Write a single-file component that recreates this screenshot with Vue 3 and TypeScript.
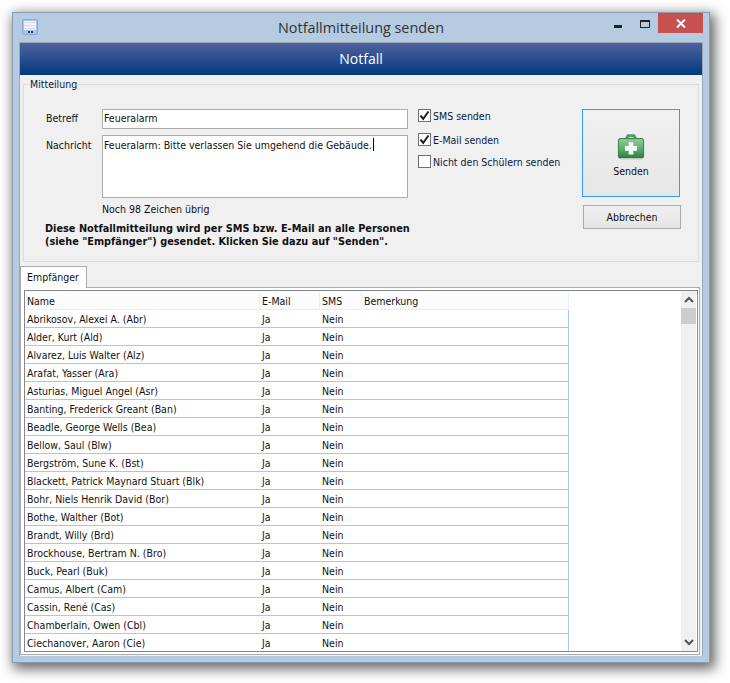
<template>
  <div class="desktop">
    <div class="window">
      <div class="titlebar">
        <svg class="app-icon" width="16" height="16" viewBox="0 0 16 16">
          <rect x="0.5" y="0.5" width="15" height="15" rx="1.5" fill="#a8c5e8" stroke="#8aa9d2" />
          <rect x="2" y="2" width="12" height="9" fill="#eef2f9" />
          <path d="M2 3.5h12M2 6.5h12M2 9.5h12" stroke="#d8dfec" />
          <rect x="6" y="12" width="2" height="2" fill="#2f3f5a" />
          <rect x="9" y="12" width="2" height="2" fill="#2f3f5a" />
        </svg>
        <span class="title">Notfallmitteilung senden</span>
        <div class="win-controls">
          <span class="win-min"></span>
          <span class="win-max"></span>
          <span class="win-close">
            <svg width="10" height="9" viewBox="0 0 10 9">
              <path d="M1 0.5 L9 8.5 M9 0.5 L1 8.5" stroke="#fff" stroke-width="2" />
            </svg>
          </span>
        </div>
      </div>

      <div class="client">
        <div class="banner">Notfall</div>

        <fieldset class="group">
          <legend>Mitteilung</legend>
          <div class="group-body">
            <div class="form">
              <div class="form-row">
                <label>Betreff</label>
                <input class="subject" type="text" v-model="subject" />
              </div>
              <div class="form-row message-row">
                <label>Nachricht</label>
                <div class="message">{{ message }}<span class="caret"></span></div>
              </div>
              <div class="remaining">Noch {{ remaining }} Zeichen übrig</div>
              <p class="hint">
                Diese Notfallmitteilung wird per SMS bzw. E-Mail an alle Personen<br />
                (siehe "Empfänger") gesendet. Klicken Sie dazu auf "Senden".
              </p>
            </div>

            <div class="checks">
              <label v-for="c in options" :key="c.text" class="check">
                <span class="box">
                  <svg v-if="c.on" width="11" height="11" viewBox="0 0 11 11">
                    <path d="M1.5 5.5 L4.2 8.8 L9.5 1.5" fill="none" stroke="#222" stroke-width="2" />
                  </svg>
                </span>
                {{ c.text }}
              </label>
            </div>

            <div class="actions">
              <button class="send">
                <svg width="28" height="28" viewBox="0 0 30 30">
                  <defs>
                    <linearGradient id="case" x1="0" y1="0" x2="0" y2="1">
                      <stop offset="0" stop-color="#93cc9e" />
                      <stop offset="0.55" stop-color="#5ea96e" />
                      <stop offset="1" stop-color="#2a7d40" />
                    </linearGradient>
                  </defs>
                  <path d="M9 7 L11 3 H19 L21 7 H18.5 L17.5 5 H12.5 L11.5 7 Z" fill="#5ba56c" stroke="#2f7a42" stroke-width="0.7" />
                  <rect x="1.5" y="7" width="27" height="21" rx="2" fill="url(#case)" stroke="#2c7a40" />
                  <rect x="4" y="28" width="23" height="1.5" fill="#c9cfc9" />
                  <path d="M12.5 11 H17.5 V15 H21.5 V20 H17.5 V24 H12.5 V20 H8.5 V15 H12.5 Z" fill="#f4fbf5" />
                </svg>
                <span>Senden</span>
              </button>
              <button class="cancel">Abbrechen</button>
            </div>
          </div>
        </fieldset>

        <div class="tabs">
          <div class="tab">Empfänger</div>
        </div>
        <div class="tab-pane">
          <div class="list">
            <div class="grid-wrap">
              <table>
                <thead>
                  <tr>
                    <th class="c-name">Name</th>
                    <th class="c-mail">E-Mail</th>
                    <th class="c-sms">SMS</th>
                    <th class="c-note">Bemerkung</th>
                  </tr>
                </thead>
                <tbody>
                  <tr v-for="name in people" :key="name">
                    <td>{{ name }}</td>
                    <td>Ja</td>
                    <td>Nein</td>
                    <td></td>
                  </tr>
                </tbody>
              </table>
            </div>
            <div class="scrollbar">
              <svg class="arrow" width="10" height="7" viewBox="0 0 10 7">
                <path d="M1 6 L5 2 L9 6" fill="none" stroke="#555" stroke-width="2" />
              </svg>
              <div class="thumb"></div>
              <div class="track"></div>
              <svg class="arrow" width="10" height="7" viewBox="0 0 10 7">
                <path d="M1 1 L5 5 L9 1" fill="none" stroke="#555" stroke-width="2" />
              </svg>
            </div>
          </div>
        </div>
      </div>
    </div>
  </div>
</template>

<script setup lang="ts">
import { ref, computed } from 'vue'

const subject = ref('Feueralarm')
const message = ref('Feueralarm: Bitte verlassen Sie umgehend die Gebäude.')
const remaining = computed(() => 151 - message.value.length)

const options = [
  { text: 'SMS senden', on: true },
  { text: 'E-Mail senden', on: true },
  { text: 'Nicht den Schülern senden', on: false },
]

const people = [
  'Abrikosov, Alexei A. (Abr)',
  'Alder, Kurt (Ald)',
  'Alvarez, Luis Walter (Alz)',
  'Arafat, Yasser (Ara)',
  'Asturias, Miguel Angel (Asr)',
  'Banting, Frederick Greant (Ban)',
  'Beadle, George Wells (Bea)',
  'Bellow, Saul (Blw)',
  'Bergström, Sune K. (Bst)',
  'Blackett, Patrick Maynard Stuart (Blk)',
  'Bohr, Niels Henrik David (Bor)',
  'Bothe, Walther (Bot)',
  'Brandt, Willy (Brd)',
  'Brockhouse, Bertram N. (Bro)',
  'Buck, Pearl (Buk)',
  'Camus, Albert (Cam)',
  'Cassin, René (Cas)',
  'Chamberlain, Owen (Cbl)',
  'Ciechanover, Aaron (Cie)',
]
</script>

<style>
html,
body {
  background: #fff;
  overflow: hidden;
}
</style>

<style scoped>
.desktop {
  width: 730px;
  height: 683px;
  padding: 12px 0 0 12px;
  box-sizing: border-box;
  font-family: "DejaVu Sans Condensed", "Liberation Sans", sans-serif;
  font-size: 10.5px;
  color: #111;
}

.window {
  width: 698px;
  height: 651px;
  box-sizing: border-box;
  background: #b5cbe1;
  border: 1px solid #8b9bb0;
  padding: 0 6px 6px 6px;
  display: flex;
  flex-direction: column;
  box-shadow: 3px 4px 12px 2px rgba(0, 0, 0, 0.6);
}

.titlebar {
  height: 29px;
  display: flex;
  align-items: flex-start;
  position: relative;
  flex: none;
}

.app-icon {
  margin: 6px 0 0 3px;
}

.title {
  position: absolute;
  left: 0;
  right: 0;
  top: 5px;
  text-align: center;
  font-family: "Open Sans", sans-serif;
  font-size: 14.4px;
  color: #333;
}

.win-controls {
  position: absolute;
  top: 0;
  right: 0;
  height: 20px;
  display: flex;
  align-items: flex-start;
}

.win-min {
  width: 8px;
  height: 3px;
  background: #222;
  margin: 12px 18px 0 0;
}

.win-max {
  width: 8px;
  height: 5px;
  border: 1px solid #222;
  border-top-width: 2px;
  margin: 7px 8px 0 0;
}

.win-close {
  width: 45px;
  height: 20px;
  background: #c75050;
  display: flex;
  align-items: center;
  justify-content: center;
}

.client {
  flex: 1;
  min-height: 0;
  background: #f0f0f0;
  border: 1px solid #9aa7b5;
  border-bottom: none;
  display: flex;
  flex-direction: column;
}

.banner {
  height: 32px;
  flex: none;
  background: linear-gradient(#51619f, #003a7d);
  color: #fff;
  font-family: "Open Sans", sans-serif;
  font-size: 14px;
  text-align: center;
  line-height: 32px;
}

.group {
  margin: 3px 3px 0 3px;
  padding: 0;
  height: 184px;
  box-sizing: border-box;
  border: 1px solid #dcdcdc;
  flex: none;
  min-width: 0;
}

.group legend {
  margin-left: 5px;
  padding: 0 2px 0 1px;
  color: #0b1a3a;
  line-height: 13px;
}

.group-body {
  display: flex;
  padding: 18px 0 0 22px;
}

.form {
  width: 363px;
}

.form-row {
  display: flex;
}

.form-row label {
  width: 56px;
  flex: none;
  line-height: 18px;
}

.subject {
  width: 306px;
  height: 20px;
  box-sizing: border-box;
  border: 1px solid #ababab;
  background: #fff;
  font: inherit;
  color: inherit;
  padding: 0 1px 2px;
  outline: none;
}

.message-row {
  margin-top: 6px;
}

.message-row label {
  line-height: 20px;
}

.message {
  width: 306px;
  height: 63px;
  box-sizing: border-box;
  border: 1px solid #ababab;
  background: #fff;
  padding: 2px 1px;
  line-height: 15px;
}

.caret {
  display: inline-block;
  width: 1px;
  height: 13px;
  background: #000;
  vertical-align: -2px;
  margin-left: 1px;
}

.remaining {
  margin: 5px 0 0 56px;
  line-height: 13px;
}

.checks {
  width: 164px;
  margin-left: 9px;
  display: flex;
  flex-direction: column;
}

.check {
  display: flex;
  align-items: center;
  gap: 2px;
  height: 13px;
  margin-bottom: 11px;
  color: #0b1a3a;
}

.check:nth-child(2) {
  margin-bottom: 9px;
}

.box {
  width: 11px;
  height: 11px;
  border: 1px solid #707070;
  background: #fff;
  flex: none;
}

.box svg {
  display: block;
}

.actions {
  display: flex;
  flex-direction: column;
}

button {
  font: inherit;
  color: #111;
  cursor: pointer;
  padding: 0;
}

.send {
  width: 98px;
  height: 88px;
  box-sizing: border-box;
  border: 1px solid #3399ff;
  background: linear-gradient(#f1f1f1, #e6e6e6);
  display: flex;
  flex-direction: column;
  align-items: center;
  padding-top: 22px;
  gap: 5px;
}

.cancel {
  width: 98px;
  height: 24px;
  box-sizing: border-box;
  margin: 8px 0 0 1px;
  border: 1px solid #acacac;
  background: linear-gradient(#f0f0f0, #e5e5e5);
}

.hint {
  margin: 6px 0 0 -1px;
  font-size: 10.85px;
  font-weight: bold;
  line-height: 13px;
  white-space: nowrap;
  color: #111;
}

.tabs {
  flex: none;
  display: flex;
  margin-top: 4px;
  position: relative;
  z-index: 1;
  height: 22px;
}

.tab {
  width: 67px;
  height: 22px;
  box-sizing: border-box;
  background: #fff;
  border: 1px solid #acacac;
  border-bottom: none;
  line-height: 20px;
  padding-left: 6px;
}

.tab-pane {
  flex: 1;
  min-height: 0;
  margin: -1px 2px 1px 0;
  background: #fff;
  border: 1px solid #acacac;
  padding: 2px 1px 2px 3px;
  display: flex;
}

.list {
  flex: 1;
  min-width: 0;
  border: 1px solid #828790;
  display: flex;
  overflow: hidden;
}

.grid-wrap {
  flex: 1;
  overflow: hidden;
}

table {
  border-collapse: separate;
  border-spacing: 0;
  table-layout: fixed;
  width: 544px;
}

th {
  height: 19px;
  box-sizing: border-box;
  padding: 1px 0 0 2px;
  font-weight: normal;
  text-align: left;
  background: #fcfcfc;
  border-right: 1px solid #ebf0f5;
  border-bottom: 1px solid #e6eef7;
}

.c-name { width: 235px; }
.c-mail { width: 60px; }
.c-sms { width: 42px; }
.c-note { width: 207px; }

td {
  height: 18px;
  box-sizing: border-box;
  padding: 1px 0 0 2px;
  border-bottom: 1px solid #a6c8ec;
  white-space: nowrap;
  overflow: hidden;
}

td:last-child {
  border-right: 1px solid #a6c8ec;
}

.scrollbar {
  width: 15px;
  flex: none;
  margin-right: 1px;
  background: #f0f0f0;
  display: flex;
  flex-direction: column;
  align-items: center;
}

.arrow {
  flex: none;
  margin: 5px 0;
}

.thumb {
  width: 15px;
  height: 16px;
  background: #cdcdcd;
  flex: none;
}

.track {
  flex: 1;
}
</style>
